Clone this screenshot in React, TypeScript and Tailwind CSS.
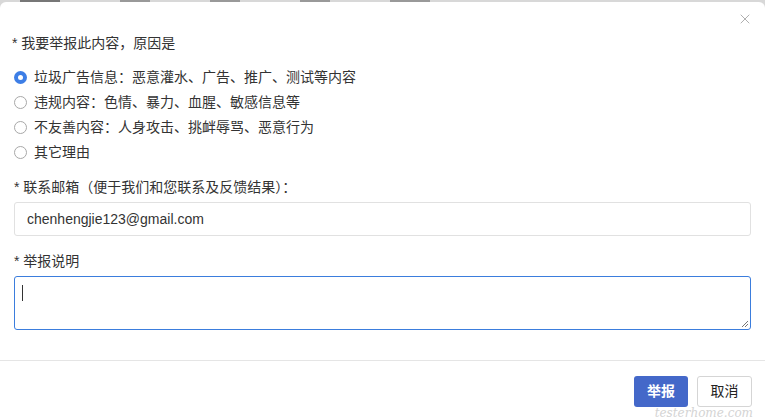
import { X } from "lucide-react";

const reasons = [
  "垃圾广告信息：恶意灌水、广告、推广、测试等内容",
  "违规内容：色情、暴力、血腥、敏感信息等",
  "不友善内容：人身攻击、挑衅辱骂、恶意行为",
  "其它理由",
];

function Radio({ checked }: { checked?: boolean }) {
  if (checked) {
    return (
      <span className="size-[13px] rounded-full bg-[#3d7ee6] flex items-center justify-center shrink-0">
        <span className="size-[5px] rounded-full bg-white" />
      </span>
    );
  }
  return <span className="size-[13px] rounded-full border border-[#a8a8a8] bg-white shrink-0" />;
}

export default function App() {
  return (
    <div
      className="w-[765px] h-[419px] bg-[#d8d8d8] overflow-hidden text-[#333] text-[14px]"
      style={{ fontFamily: '"Liberation Sans", "Noto Sans CJK SC", sans-serif' }}
    >
      <div className="h-[2px] flex gap-[60px] pl-[20px]">
        <span className="w-[40px] bg-[#777]" />
        <span className="w-[30px] bg-[#999]" />
        <span className="w-[30px] bg-[#999]" />
        <span className="w-[30px] bg-[#999]" />
        <span className="w-[40px] bg-[#999]" />
      </div>
      <div className="relative bg-white rounded-t-[6px] h-[417px] flex flex-col">
        <button className="absolute right-[12px] top-[9px] text-[#b0b0b0]">
          <X className="size-[16px]" strokeWidth={1.5} />
        </button>

        <div className="px-[14px] pt-[31px] flex flex-col">
          <div className="leading-[20px] -ml-[2px]">* 我要举报此内容，原因是</div>

          <div className="mt-[12px] flex flex-col">
            {reasons.map((r, i) => (
              <label key={r} className="flex items-center gap-[7px] h-[25px]">
                <Radio checked={i === 0} />
                <span>{r}</span>
              </label>
            ))}
          </div>

          <div className="mt-[12px] leading-[20px]">* 联系邮箱（便于我们和您联系及反馈结果）：</div>
          <div className="mt-[5px] h-[34px] border border-[#e1e1e1] rounded-[3px] flex items-center px-[12px] text-[#333]">
            chenhengjie123@gmail.com
          </div>

          <div className="mt-[15px] leading-[20px]">* 举报说明</div>
          <div className="relative mt-[5px] h-[54px] border border-[#3b7ddd] rounded-[3px]">
            <span className="absolute left-[7px] top-[8px] w-px h-[16px] bg-[#333]" />
            <svg className="absolute right-[1px] bottom-[1px]" width="8" height="8" viewBox="0 0 8 8">
              <path d="M7 1 L1 7 M7 4 L4 7" stroke="#777" strokeWidth="1" />
            </svg>
          </div>
        </div>

        <div className="mt-[30px] border-t border-[#e5e5e5]" />

        <div className="flex justify-end gap-[9px] pr-[13px] pt-[15px] relative">
          <button className="w-[54px] h-[31px] rounded-[3px] bg-[#4468c9] text-white font-bold text-[14px]">
            举报
          </button>
          <button className="w-[55px] h-[31px] rounded-[3px] border border-[#d5d5d5] bg-white text-[#222] text-[14px]">
            取消
          </button>
          <span
            className="absolute right-[12px] top-[46px] leading-[12px] text-[12px] italic text-[#d4d4d4] pointer-events-none"
            style={{ fontFamily: '"DejaVu Serif", serif' }}
          >
            testerhome.com
          </span>
        </div>
      </div>
    </div>
  );
}
